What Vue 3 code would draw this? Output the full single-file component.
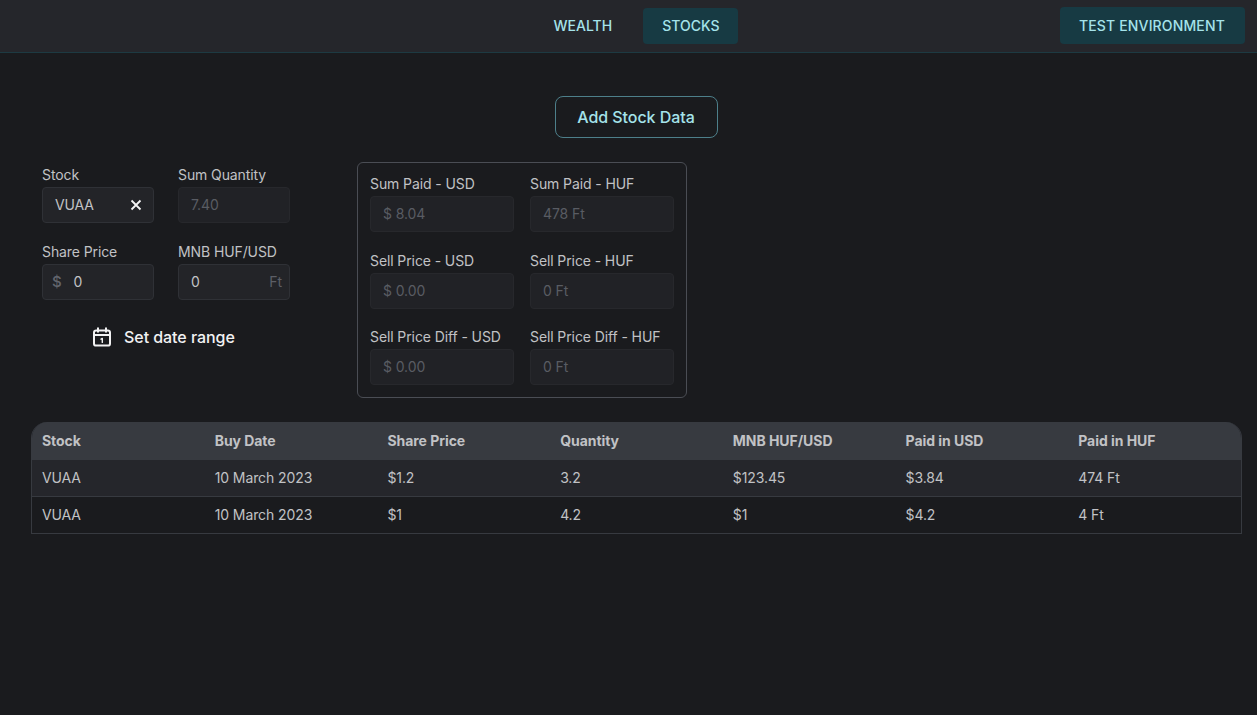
<script setup>
const topFields = [
  [
    { label: 'Stock', value: 'VUAA', clear: true },
    { label: 'Sum Quantity', value: '7.40', disabled: true },
  ],
  [
    { label: 'Share Price', value: '0', prefix: '$' },
    { label: 'MNB HUF/USD', value: '0', suffix: 'Ft' },
  ],
]
const summary = [
  { label: 'Sum Paid - USD', value: '$ 8.04' },
  { label: 'Sum Paid - HUF', value: '478 Ft' },
  { label: 'Sell Price - USD', value: '$ 0.00' },
  { label: 'Sell Price - HUF', value: '0 Ft' },
  { label: 'Sell Price Diff - USD', value: '$ 0.00' },
  { label: 'Sell Price Diff - HUF', value: '0 Ft' },
]
const columns = ['Stock', 'Buy Date', 'Share Price', 'Quantity', 'MNB HUF/USD', 'Paid in USD', 'Paid in HUF']
const rows = [
  ['VUAA', '10 March 2023', '$1.2', '3.2', '$123.45', '$3.84', '474 Ft'],
  ['VUAA', '10 March 2023', '$1', '4.2', '$1', '$4.2', '4 Ft'],
]
</script>

<template>
  <div class="page">
    <header class="header">
      <nav class="nav">
        <a class="nav-item">WEALTH</a>
        <a class="nav-item active">STOCKS</a>
      </nav>
      <div class="env">TEST ENVIRONMENT</div>
    </header>

    <main class="main">
      <div class="action-row">
        <button class="add-btn">Add Stock Data</button>
      </div>

      <section class="forms">
        <div class="left">
          <div v-for="(row, i) in topFields" :key="i" class="left-row">
            <div v-for="f in row" :key="f.label" class="field">
              <label class="label">{{ f.label }}</label>
              <div class="input" :class="{ disabled: f.disabled }">
                <span v-if="f.prefix" class="prefix">{{ f.prefix }}</span>
                <span class="value">{{ f.value }}</span>
                <span v-if="f.suffix" class="suffix">{{ f.suffix }}</span>
                <svg v-if="f.clear" class="clear" viewBox="0 0 12 12" width="12" height="12">
                  <path d="M1.5 1.5 10.5 10.5M10.5 1.5 1.5 10.5" fill="none" stroke="#f4f4f5" stroke-width="1.8" />
                </svg>
              </div>
            </div>
          </div>
          <button class="date-btn">
            <svg viewBox="0 0 20 20" width="20" height="20" fill="none" stroke="#f2f2f3" stroke-width="2" stroke-linecap="round" stroke-linejoin="round">
              <rect x="2" y="3.4" width="16" height="15.2" rx="2.2" />
              <path d="M2 8H18M6 1.2V4.8M14 1.2V4.8" />
              <path d="M9 12.2 10.3 11.4V15.4" stroke-width="1.4" />
            </svg>
            <span>Set date range</span>
          </button>
        </div>

        <div class="summary">
          <div v-for="s in summary" :key="s.label" class="field">
            <label class="label">{{ s.label }}</label>
            <div class="input disabled"><span class="value">{{ s.value }}</span></div>
          </div>
        </div>
      </section>

      <div class="table">
        <div class="tr head">
          <div v-for="c in columns" :key="c" class="td">{{ c }}</div>
        </div>
        <div v-for="(r, i) in rows" :key="i" class="tr body" :class="{ odd: i === 0 }">
          <div v-for="(cell, j) in r" :key="j" class="td">{{ cell }}</div>
        </div>
      </div>
    </main>
  </div>
</template>

<style>
html, body { margin: 0; background: #1a1b1e; }
</style>

<style scoped>
.page {
  min-height: 715px;
  background: #1a1b1e;
  font-family: Inter, "Liberation Sans", sans-serif;
  color: #c1c2c5;
  font-size: 14px;
  letter-spacing: -0.1px;
}
.header {
  height: 52px;
  padding-left: 16px;
  box-sizing: content-box;
  background: #25262b;
  border-bottom: 1px solid #1d3a42;
  display: flex;
  align-items: center;
  justify-content: center;
  position: relative;
}
.nav { display: flex; gap: 12px; }
.nav-item {
  height: 36px;
  display: flex;
  align-items: center;
  padding: 0 19px;
  border-radius: 4px;
  color: #a5e3ea;
  font-size: 14px;
  font-weight: 500;
  letter-spacing: 0;
  padding-bottom: 1px;
  box-sizing: border-box;
}
.nav-item.active { background: #173a43; }
.env {
  position: absolute;
  right: 12px;
  top: 7px;
  height: 37px;
  padding: 0 20px 0 19px;
  display: flex;
  align-items: center;
  border-radius: 4px;
  background: #173a43;
  color: #a5e3ea;
  font-weight: 500;
  letter-spacing: 0.15px;
}
.main { padding: 43px 15px 0 31px; }
.action-row { display: flex; justify-content: center; }
.add-btn {
  width: 163px;
  height: 42px;
  margin-left: -1px;
  background: transparent;
  border: 1px solid #4d7f8a;
  border-radius: 8px;
  color: #a5e3ea;
  font: 500 16px Inter, "Liberation Sans", sans-serif;
  letter-spacing: -0.05px;
}
.forms { display: flex; margin-top: 24px; padding-left: 11px; }
.left { width: 315px; display: flex; flex-direction: column; gap: 19.5px; padding-top: 4px; }
.left-row { display: flex; gap: 24px; }
.left-row .field { width: 112px; }
.field { display: flex; flex-direction: column; gap: 4px; }
.label {
  font-size: 14px;
  line-height: 17px;
  font-weight: 400;
  color: #c1c2c5;
}
.input {
  height: 36px;
  box-sizing: border-box;
  border: 1px solid #2f3136;
  border-radius: 4px;
  background: #232428;
  display: flex;
  align-items: center;
  padding: 0 12px 1px;
  color: #c1c2c5;
  font-size: 14px;
  position: relative;
}
.input.disabled {
  background: #212226;
  border-color: #27282c;
  color: #595c63;
}
.prefix { color: #62656d; margin-left: -3px; margin-right: 12px; font-size: 15px; font-weight: 500; }
.suffix { position: absolute; right: 7px; color: #5c5f66; }
.clear { position: absolute; right: 11px; top: 11px; }
.date-btn {
  align-self: flex-start;
  margin: -0.5px 0 0 50px;
  padding: 0;
  height: 36px;
  display: flex;
  align-items: center;
  gap: 12px;
  background: none;
  border: 0;
  color: #f2f2f3;
  font: 500 16px Inter, "Liberation Sans", sans-serif;
  letter-spacing: -0.05px;
}
.summary {
  width: 330px;
  box-sizing: border-box;
  height: 236px;
  border: 1px solid #4a4d54;
  border-radius: 6px;
  padding: 12px;
  display: grid;
  grid-template-columns: 144px 144px;
  column-gap: 16px;
  row-gap: 16px;
  align-content: start;
  grid-auto-rows: 60.5px;
}
.table {
  margin-top: 24px;
  width: 1211px;
  box-sizing: border-box;
  border-left: 1px solid #373a40;
  border-right: 1px solid #373a40;
  border-bottom: 1px solid #373a40;
  border-radius: 16px 16px 0 0;
  overflow: hidden;
}
.tr { display: grid; grid-template-columns: repeat(7, 1fr); align-items: center; }
.td { padding-left: 10px; padding-bottom: 2px; }
.head {
  height: 38px;
  background: #373a40;
  font-weight: 700;
  letter-spacing: -0.05px;
  color: #c1c2c5;
}
.body { height: 36px; color: #c1c2c5; box-sizing: border-box; }
.body.odd { height: 37px; background: #25262b; border-bottom: 1px solid #373a40; }
</style>
